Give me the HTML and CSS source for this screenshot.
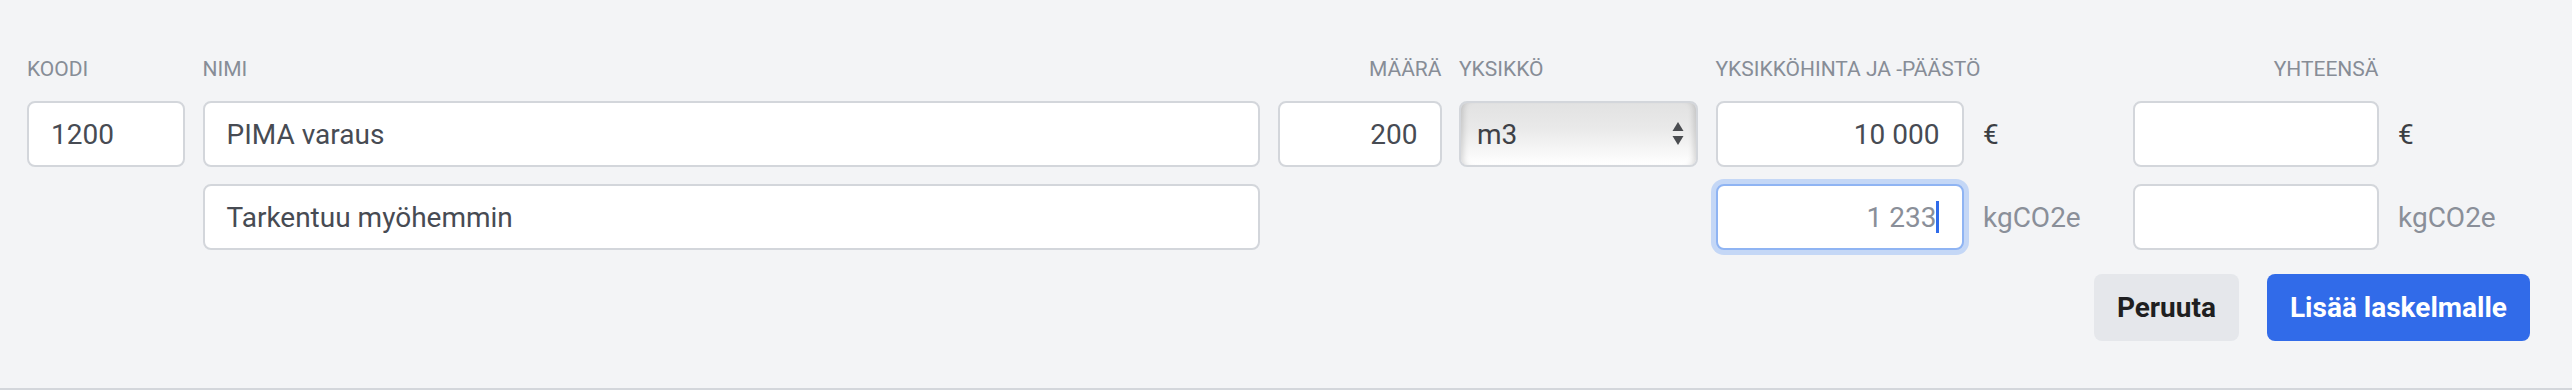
FILE: index.html
```html
<!DOCTYPE html>
<html lang="fi">
<head>
<meta charset="utf-8">
<title>Lisää rivi</title>
<link rel="stylesheet" href="styles.css">
</head>
<body>
<section class="row-form">
  <div class="grid">
    <span class="label c1">Koodi</span>
    <span class="label c2">Nimi</span>
    <span class="label c3 right">Määrä</span>
    <span class="label c4">Yksikkö</span>
    <span class="label c5 wide">Yksikköhinta ja -päästö</span>
    <span class="label c7 right">Yhteensä</span>

    <div class="field c1 r2"><span class="val">1200</span></div>
    <div class="field c2 r2"><span class="val">PIMA varaus</span></div>
    <div class="field c3 r2 num"><span class="val">200</span></div>
    <div class="select c4 r2">
      <span class="val">m3</span>
      <svg class="arrows" width="12" height="26" viewBox="0 0 12 26" aria-hidden="true">
        <path d="M6 1 L11.5 10 L0.5 10 Z" fill="#4a4c50"/>
        <path d="M0.5 15 L11.5 15 L6 24 Z" fill="#4a4c50"/>
      </svg>
    </div>
    <div class="field c5 r2 num"><span class="val">10&nbsp;000</span></div>
    <span class="unit dark c6 r2">€</span>
    <div class="field c7 r2"></div>
    <span class="unit dark c8 r2">€</span>

    <div class="field c2 r3"><span class="val">Tarkentuu myöhemmin</span></div>
    <div class="field c5 r3 num focus"><span class="val muted">1&nbsp;233</span><span class="caret"></span></div>
    <span class="unit c6 r3">kgCO2e</span>
    <div class="field c7 r3"></div>
    <span class="unit c8 r3">kgCO2e</span>

    <div class="actions">
      <button class="btn btn-cancel" type="button">Peruuta</button>
      <button class="btn btn-primary" type="button">Lisää laskelmalle</button>
    </div>
  </div>
</section>
</body>
</html>
```
FILE: styles.css
```css
html, body {
  margin: 0;
  padding: 0;
}

body {
  background: #f3f4f6;
  font-family: Roboto, "Noto Sans", "Liberation Sans", sans-serif;
  color: #4b5059;
}

.row-form {
  box-sizing: border-box;
  height: 390px;
  padding: 54px 42px 47px 27px;
  border-bottom: 2px solid #d3d6db;
}

.grid {
  display: grid;
  grid-template-columns: 158px 1fr 164px 239px 248px 134px 246px 134px;
  grid-template-rows: 30px 66px 66px 67px;
  column-gap: 17.5px;
  row-gap: 17px;
}

.c1 { grid-column: 1; }
.c2 { grid-column: 2; }
.c3 { grid-column: 3; }
.c4 { grid-column: 4; }
.c5 { grid-column: 5; }
.c6 { grid-column: 6; }
.c7 { grid-column: 7; }
.c8 { grid-column: 8; }
.r2 { grid-row: 2; }
.r3 { grid-row: 3; }

.label {
  grid-row: 1;
  font-size: 21px;
  line-height: 30px;
  text-transform: uppercase;
  color: #878d97;
  white-space: nowrap;
}

.label.right { text-align: right; }
.label.wide { grid-column: 5 / span 2; }

.field {
  box-sizing: border-box;
  display: flex;
  align-items: center;
  background: #fff;
  border: 2px solid #d3d6db;
  border-radius: 8px;
  padding: 0 22px;
  font-size: 28px;
  color: #474b53;
}

.field.num {
  justify-content: flex-end;
  padding-right: 22px;
}

.field.focus {
  border-color: #8fb4f3;
  box-shadow: 0 0 0 5px #c4d7f6;
  padding-right: 23px;
}

.val { white-space: nowrap; }
.muted { color: #8a8f99; }

.caret {
  display: inline-block;
  width: 3px;
  height: 32px;
  background: #2f6bea;
  margin-left: -1px;
}

.select {
  box-sizing: border-box;
  display: flex;
  align-items: center;
  justify-content: space-between;
  border: 2px solid #d3d6db;
  border-radius: 8px;
  padding: 0 12px 0 16px;
  font-size: 28px;
  color: #3e4147;
  background: linear-gradient(#e2e2e2 0%, #e9e9e9 40%, #f4f4f4 70%, #ffffff 100%);
  box-shadow: inset 7px 0 6px -5px rgba(0, 0, 0, 0.16), inset -7px 0 6px -5px rgba(0, 0, 0, 0.16);
}

.arrows { display: block; }

.unit {
  align-self: center;
  font-size: 28px;
  color: #8a8f99;
  padding-left: 2px;
  white-space: nowrap;
}

.unit.dark { color: #3b3e44; }

.actions {
  grid-column: 1 / -1;
  grid-row: 4;
  margin-top: 7px;
  display: flex;
  justify-content: flex-end;
  gap: 28px;
}

.btn {
  height: 67px;
  border: 0;
  border-radius: 8px;
  padding: 0 23px;
  font-family: Roboto, "Noto Sans", "Liberation Sans", sans-serif;
  font-size: 28px;
  font-weight: 700;
}

.btn-cancel {
  background: #e5e7eb;
  color: #1f1f21;
}

.btn-primary {
  background: #316be9;
  color: #fff;
}
```
